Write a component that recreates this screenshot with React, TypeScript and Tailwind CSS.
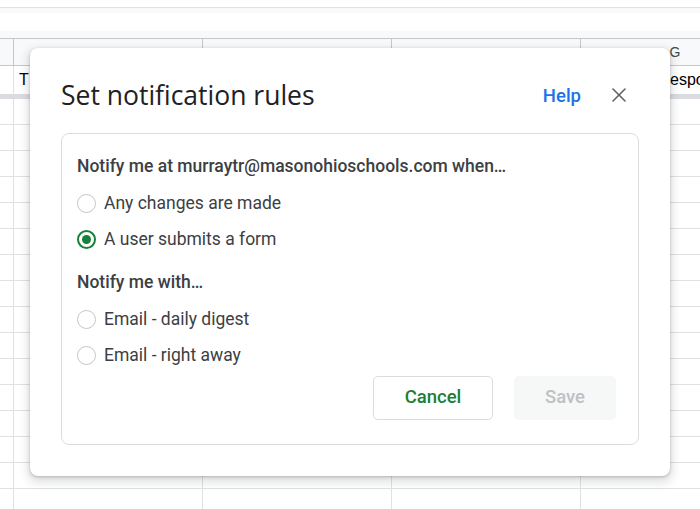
import { X } from "lucide-react";

const cols = [189, 189, 189, 189];

function GridRow({ h }: { h: string }) {
  return (
    <div className={`flex ${h} border-b border-[#e1e1e1]`}>
      <div className="w-[14px] shrink-0 border-r border-[#e1e1e1]" />
      {cols.map((_, i) => (
        <div key={i} className="w-[189px] shrink-0 border-r border-[#e1e1e1]" />
      ))}
    </div>
  );
}

function Radio({ checked, label }: { checked?: boolean; label: string }) {
  return (
    <label className="flex h-9 items-center gap-[8px]">
      <span
        className={
          checked
            ? "flex h-[19px] w-[19px] items-center justify-center rounded-full border-2 border-[#188038]"
            : "h-[19px] w-[19px] rounded-full border border-[#c4c7c5]"
        }
      >
        {checked && <span className="h-[9px] w-[9px] rounded-full bg-[#188038]" />}
      </span>
      <span className="text-[17.5px] text-[#3c4043]">{label}</span>
    </label>
  );
}

export default function App() {
  return (
    <div className="relative h-[509px] w-[700px] overflow-hidden bg-white font-['Roboto',sans-serif]">
      {/* sheet behind */}
      <div className="h-[8px] border-b border-[#e1e1e1]" />
      <div className="h-[5px] bg-[#f8f9fa]" />
      <div className="h-[18px]" />
      <div className="h-[7px] bg-[#f8f9fa]" />
      <div className="flex h-[28px] border-y border-[#c7c7c7] bg-[#f8f9fa]">
        <div className="w-[14px] shrink-0 border-r border-[#c7c7c7]" />
        {["", "", "", "G"].map((c, i) => (
          <div
            key={i}
            className="flex w-[189px] shrink-0 items-center justify-center border-r border-[#c7c7c7] font-['Liberation_Sans',sans-serif] text-[14px] text-[#444746]"
          >
            {c}
          </div>
        ))}
      </div>
      <div className="flex h-[28px] items-center font-['Liberation_Sans',sans-serif] text-[16px] text-black">
        <div className="h-full w-[14px] shrink-0 border-r border-[#e1e1e1]" />
        <div className="w-[567px] shrink-0 pl-[5px]">
          <div className="w-[12px] overflow-hidden whitespace-nowrap">T</div>
        </div>
        <div className="whitespace-nowrap pl-[89px]">espo</div>
      </div>
      <div className="h-[5px] bg-[#dadce0]" />
      {Array.from({ length: 16 }).map((_, i) => (
        <GridRow key={i} h="h-[26px]" />
      ))}

      {/* dialog */}
      <div className="absolute left-[30px] top-[48px] flex h-[428px] w-[640px] flex-col rounded-[8px] bg-white px-[31px] pb-[31px] shadow-[0_4px_8px_3px_rgba(60,64,67,0.15),0_1px_3px_rgba(60,64,67,0.3)]">
        <div className="flex h-[85px] items-center pt-[9px]">
          <h2 className="flex-1 font-['Open_Sans',sans-serif] text-[26.5px] leading-8 text-[#202124]">
            Set notification rules
          </h2>
          <span className="mr-[26px] mt-[3px] text-[18.5px] font-medium text-[#1a73e8]">Help</span>
          <X className="mr-[8px] h-6 w-6 text-[#5f6368]" strokeWidth={1.6} />
        </div>
        <div className="flex flex-1 flex-col rounded-[8px] border border-[#dadce0] pb-[24px] pl-[15px] pr-[22px] pt-[20px]">
          <p className="h-6 whitespace-nowrap text-[17.5px] font-medium leading-6 text-[#3c4043]">
            Notify me at murraytr@masonohioschools.com when…
          </p>
          <div className="mt-[7px]">
            <Radio label="Any changes are made" />
            <Radio checked label="A user submits a form" />
          </div>
          <p className="mt-[13px] h-6 text-[17.5px] font-medium leading-6 text-[#3c4043]">
            Notify me with…
          </p>
          <div className="mt-[7px]">
            <Radio label="Email - daily digest" />
            <Radio label="Email - right away" />
          </div>
          <div className="mt-auto flex justify-end gap-[21px]">
            <button className="h-[44px] w-[120px] rounded-[5px] border border-[#dadce0] text-[18.5px] font-medium text-[#188038]">
              Cancel
            </button>
            <button className="h-[44px] w-[102px] rounded-[5px] bg-[#f6f7f7] text-[18.5px] font-medium text-[#bdc1c6]">
              Save
            </button>
          </div>
        </div>
      </div>
    </div>
  );
}
